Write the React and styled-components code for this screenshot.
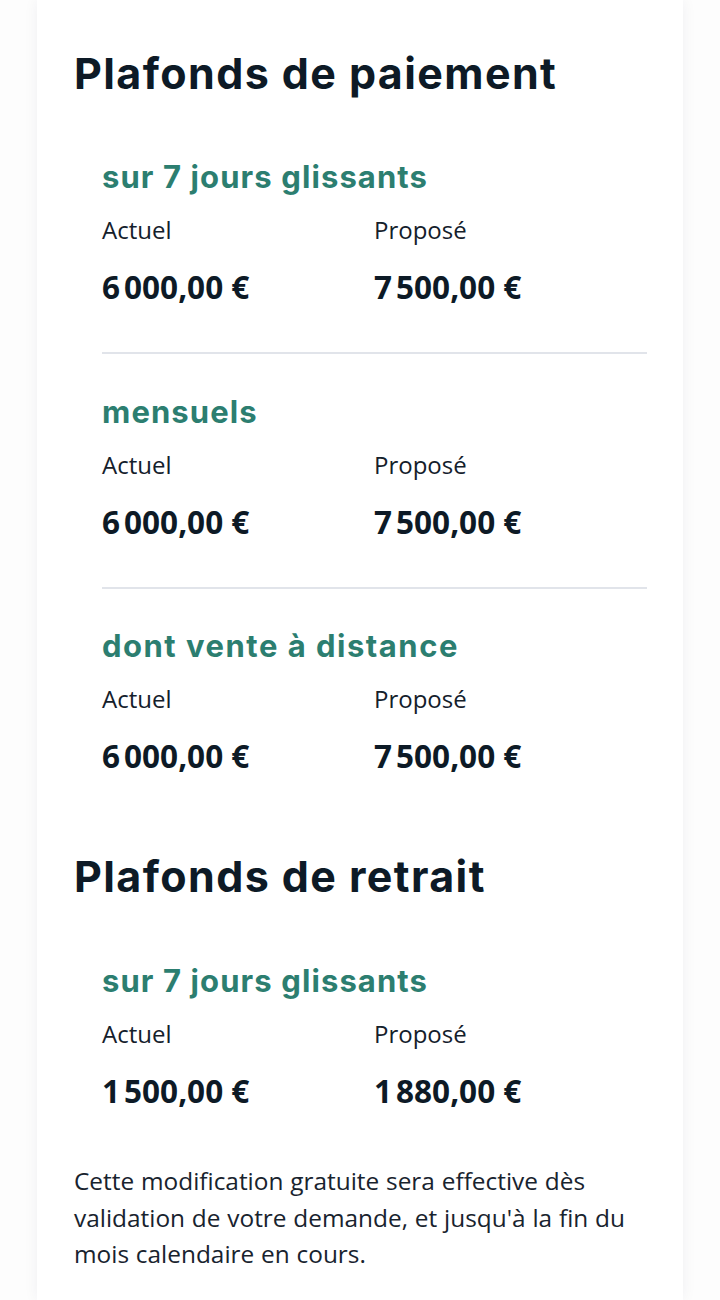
import React from 'react';
import styled, { createGlobalStyle } from 'styled-components';

const GlobalStyle = createGlobalStyle`
  html, body {
    margin: 0;
    padding: 0;
    background: #fdfdfd;
  }
  body {
    font-family: "Open Sans", "Noto Sans", sans-serif;
    color: #0f1b26;
  }
`;

const Page = styled.div`
  width: 720px;
  height: 1300px;
  overflow: hidden;
  padding: 0 37px;
  box-sizing: border-box;
`;

const Card = styled.div`
  background: #ffffff;
  min-height: 1300px;
  padding: 49px 36px 0 37px;
  box-sizing: border-box;
  box-shadow: 0 0 14px rgba(30, 40, 60, 0.06);
`;

const Title = styled.h2`
  margin: ${p => (p.$first ? '0' : '78px 0 0')};
  font-family: Inter, "Noto Sans", sans-serif;
  font-weight: 700;
  font-size: 43px;
  letter-spacing: 1.4px;
  line-height: 48px;
  color: #0d1a26;
`;

const Group = styled.section`
  padding-left: 28px;
  margin-top: ${p => p.$gap}px;
`;

const SubTitle = styled.h3`
  margin: 0;
  font-family: Inter, "Noto Sans", sans-serif;
  font-weight: 700;
  font-size: 31px;
  letter-spacing: ${p => (p.$wide ? '1.5px' : '1.1px')};
  line-height: 40px;
  color: #2c7e70;
`;

const Grid = styled.div`
  display: grid;
  grid-template-columns: 272px 1fr;
  margin-top: 18px;
`;

const Label = styled.div`
  font-size: 24px;
  line-height: 30px;
  color: #14202b;
`;

const Amount = styled.div`
  margin-top: 24px;
  font-weight: 700;
  font-size: 31.5px;
  line-height: 36px;
  color: #0d1a26;
`;

const Divider = styled.hr`
  margin: 47px 0 0;
  border: 0;
  height: 2px;
  background: #e1e4ea;
`;

const Note = styled.p`
  margin: 54px 0 0;
  font-size: 24.4px;
  word-spacing: 0.5px;
  line-height: 36.5px;
  color: #18232e;
`;

const Limit = ({ title, current, proposed, divider, gap, wide }) => (
  <Group $gap={gap}>
    <SubTitle $wide={wide}>{title}</SubTitle>
    <Grid>
      <div>
        <Label>Actuel</Label>
        <Amount>{current}</Amount>
      </div>
      <div>
        <Label>Proposé</Label>
        <Amount>{proposed}</Amount>
      </div>
    </Grid>
    {divider && <Divider />}
  </Group>
);

export default function App() {
  return (
    <>
      <GlobalStyle />
      <Page>
        <Card>
          <Title $first>Plafonds de paiement</Title>
          <Limit gap={60} title="sur 7 jours glissants" current={'6\u202F000,00 €'} proposed={'7\u202F500,00 €'} divider />
          <Limit gap={38} title="mensuels" current={'6\u202F000,00 €'} proposed={'7\u202F500,00 €'} divider />
          <Limit gap={37} wide title="dont vente à distance" current={'6\u202F000,00 €'} proposed={'7\u202F500,00 €'} />

          <Title>Plafonds de retrait</Title>
          <Limit gap={61} title="sur 7 jours glissants" current={'1\u202F500,00 €'} proposed={'1\u202F880,00 €'} />

          <Note>
            Cette modification gratuite sera effective dès validation de votre demande, et jusqu'à la fin du mois calendaire en cours.
          </Note>
        </Card>
      </Page>
    </>
  );
}
